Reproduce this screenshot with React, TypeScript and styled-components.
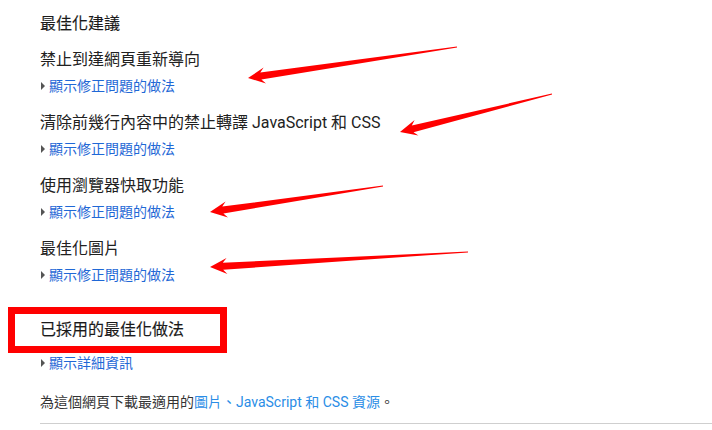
import styled, { createGlobalStyle } from "styled-components";

const GlobalStyle = createGlobalStyle`
  html, body {
    margin: 0;
    padding: 0;
    background: #fff;
  }
  body {
    font-family: Roboto, "Noto Sans CJK TC", "Noto Sans", sans-serif;
    color: #212121;
  }
`;

const Page = styled.div`
  position: relative;
  width: 712px;
  height: 430px;
  overflow: hidden;
  padding-top: 12px;
  box-sizing: border-box;
`;

const Content = styled.div`
  padding-left: 40px;
`;

const SectionTitle = styled.h2<{ $gap?: number }>`
  position: relative;
  margin: ${(p) => p.$gap ?? 0}px 0 0;
  font-size: 16px;
  line-height: 24px;
  font-weight: 400;
  -webkit-text-stroke: 0.15px #212121;
  color: #1a1a1a;
`;

const Item = styled.div`
  margin-top: 12px;
  & + & {
    margin-top: 15px;
  }
`;

const ItemTitle = styled.div`
  font-size: 16px;
  line-height: 24px;
  color: #212121;
`;

const Toggle = styled.a<{ $gap?: number }>`
  display: flex;
  align-items: center;
  margin-top: ${(p) => p.$gap ?? 4}px;
  font-size: 14px;
  line-height: 20px;
  color: #1f68d6;
  text-decoration: none;
  cursor: pointer;

  &::before {
    content: "";
    width: 0;
    height: 0;
    margin: 0 4px 0 1px;
    border-top: 4px solid transparent;
    border-bottom: 4px solid transparent;
    border-left: 4px solid #555;
  }
`;

const Paragraph = styled.p`
  margin: 19px 0 0;
  font-size: 14px;
  line-height: 20px;
  color: #333;
`;

const InlineLink = styled.a`
  color: #2a8de6;
  text-decoration: none;
`;

const Divider = styled.hr`
  margin: 11px 0 0;
  border: 0;
  border-top: 1px solid #cfcfcf;
`;

const Highlight = styled.span`
  position: absolute;
  left: -32px;
  top: -11px;
  width: 219px;
  height: 46px;
  box-sizing: border-box;
  border: 7px solid #ff0000;
  pointer-events: none;
`;

const Overlay = styled.svg`
  position: absolute;
  left: 0;
  top: 0;
  pointer-events: none;
`;

type Pt = [number, number];

// tapered annotation arrow, tip -> tail
function arrowPoints(tip: Pt, tail: Pt): string {
  const dx = tail[0] - tip[0];
  const dy = tail[1] - tip[1];
  const len = Math.hypot(dx, dy);
  const ux = dx / len;
  const uy = dy / len;
  const nx = -uy;
  const ny = ux;
  const at = (a: number, b: number): Pt => [
    tip[0] + ux * a + nx * b,
    tip[1] + uy * a + ny * b,
  ];
  const pts: Pt[] = [
    tip,
    at(17, 8),
    at(13, 3.5),
    [tail[0] + nx * 0.4, tail[1] + ny * 0.4],
    [tail[0] - nx * 0.4, tail[1] - ny * 0.4],
    at(13, -3.5),
    at(17, -8),
  ];
  return pts.map((p) => `${p[0].toFixed(1)},${p[1].toFixed(1)}`).join(" ");
}

const arrows: [Pt, Pt][] = [
  [[248, 78], [457, 47]],
  [[400, 132], [552, 94]],
  [[210, 212], [383, 186]],
  [[210, 267], [468, 252]],
];

const suggestions = [
  "禁止到達網頁重新導向",
  "清除前幾行內容中的禁止轉譯 JavaScript 和 CSS",
  "使用瀏覽器快取功能",
  "最佳化圖片",
];

export default function App() {
  return (
    <>
      <GlobalStyle />
      <Page>
        <Content>
          <SectionTitle>最佳化建議</SectionTitle>
          {suggestions.map((s) => (
            <Item key={s}>
              <ItemTitle>{s}</ItemTitle>
              <Toggle>顯示修正問題的做法</Toggle>
            </Item>
          ))}
          <SectionTitle $gap={33}>
            已採用的最佳化做法
            <Highlight />
          </SectionTitle>
          <Toggle $gap={11}>顯示詳細資訊</Toggle>
          <Paragraph>
            為這個網頁下載最適用的
            <InlineLink>圖片、JavaScript 和 CSS 資源</InlineLink>。
          </Paragraph>
          <Divider />
        </Content>
        <Overlay width={712} height={430} viewBox="0 0 712 430">
          {arrows.map(([tip, tail], i) => (
            <polygon key={i} points={arrowPoints(tip, tail)} fill="#ff0000" />
          ))}
        </Overlay>
      </Page>
    </>
  );
}
